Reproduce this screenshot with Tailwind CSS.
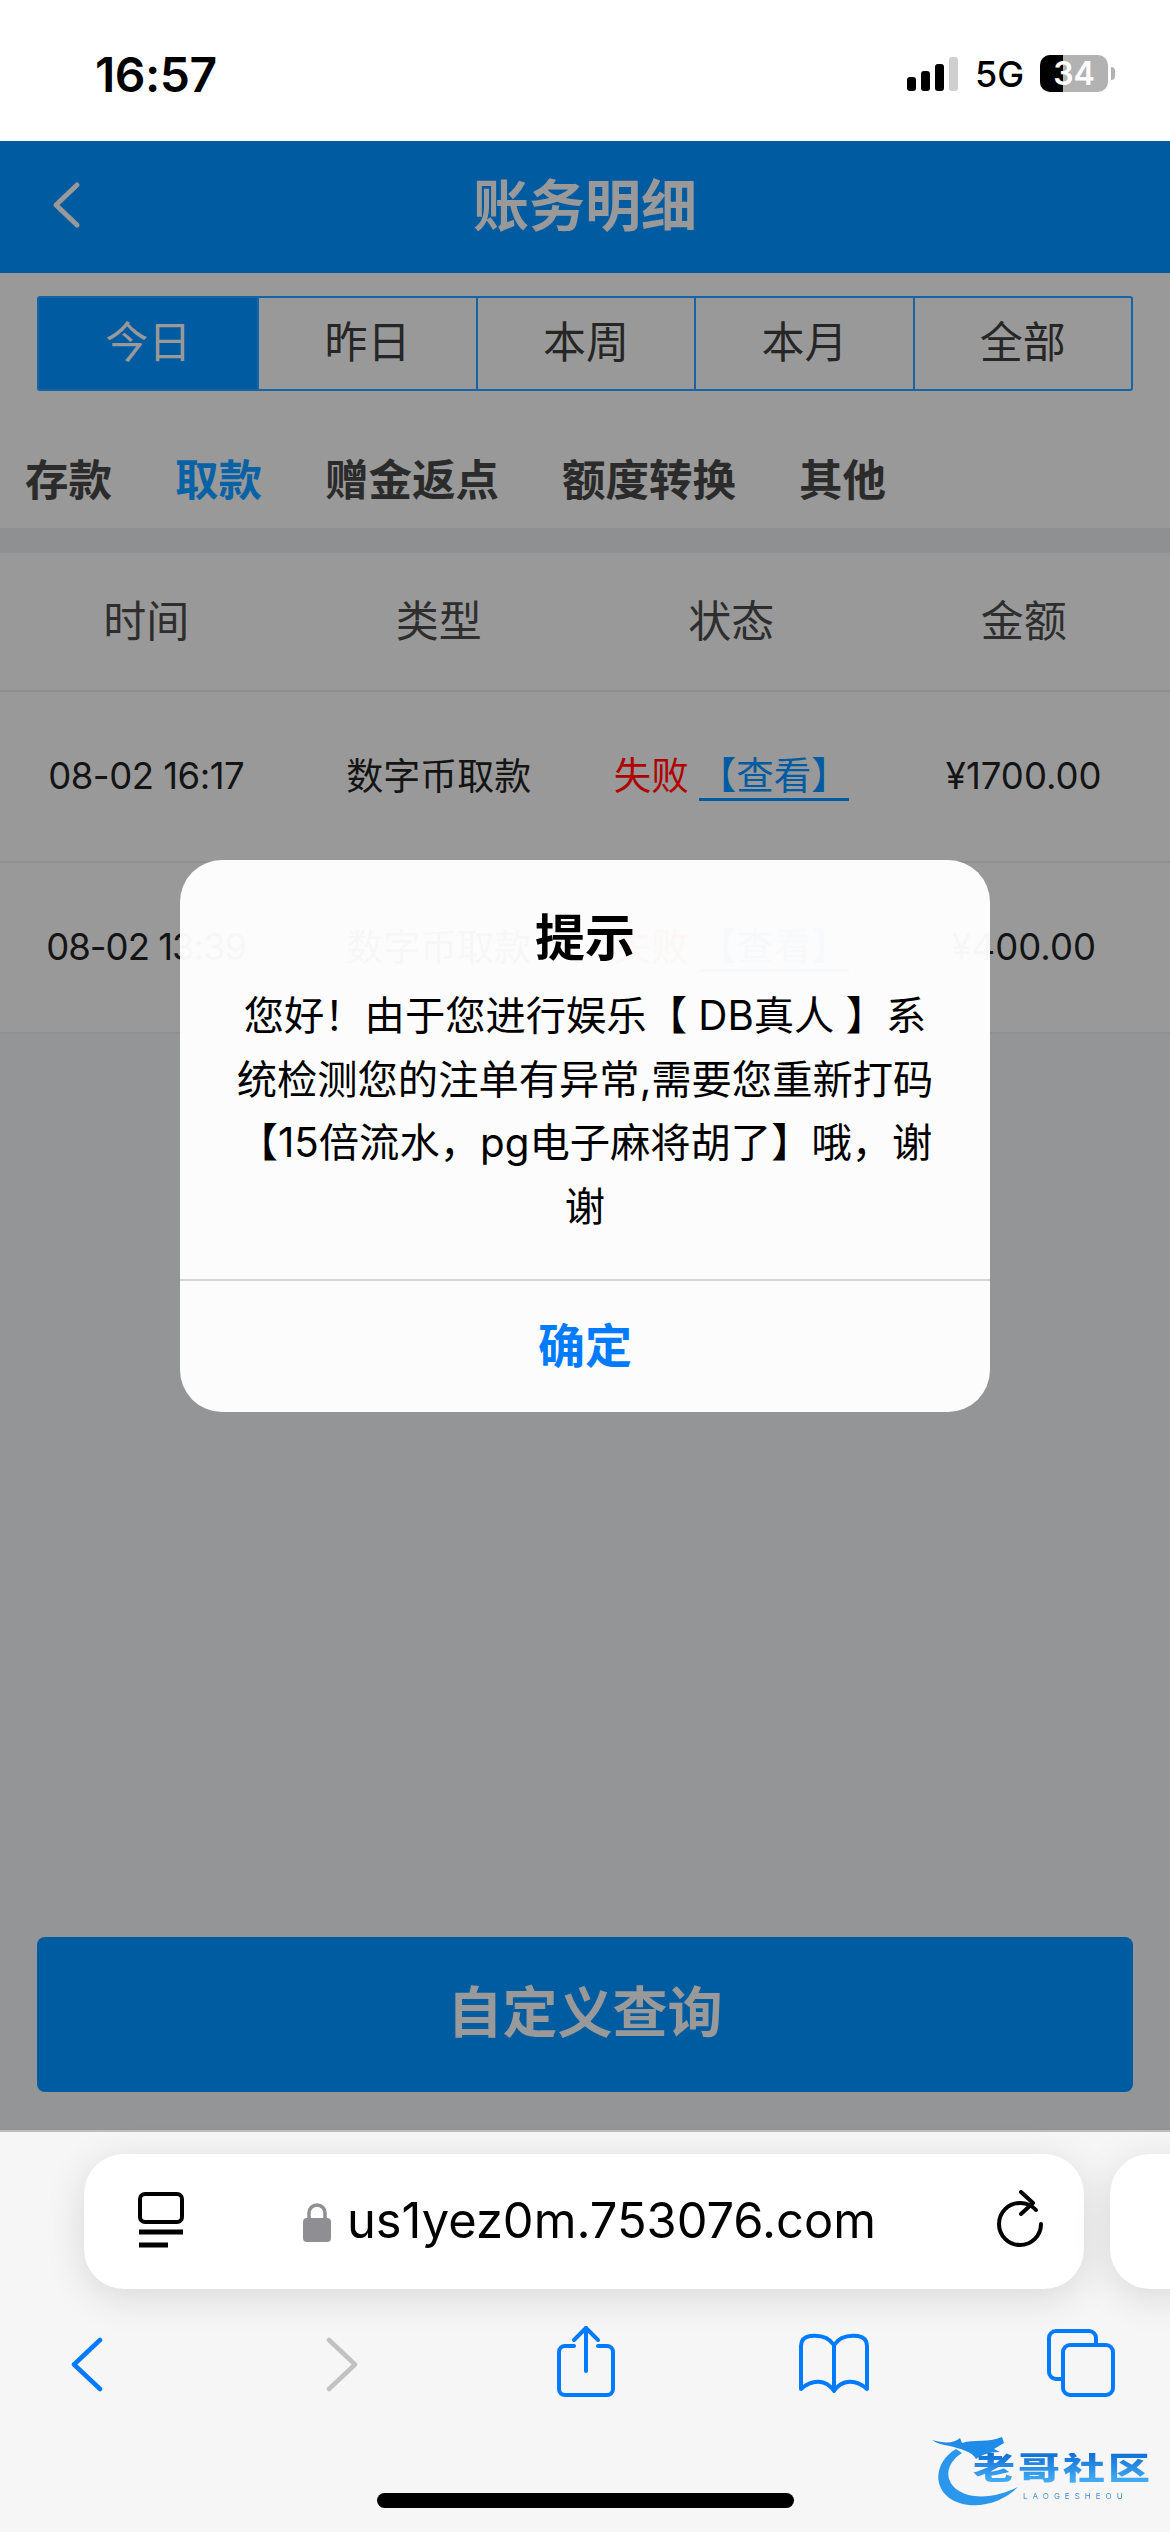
<!DOCTYPE html>
<html lang="zh-CN">
<head>
  <meta charset="UTF-8">
  <meta name="viewport" content="width=device-width, initial-scale=1.0">
  <title>账务明细</title>
  <script src="https://cdn.jsdelivr.net/npm/@tailwindcss/browser@4"></script>
</head>
<body class="bg-[#949597] font-['Inter','Noto_Sans_CJK_SC',sans-serif]">
  <div class="relative w-[1170px] h-[2532px] overflow-hidden flex flex-col">

    <!-- status bar -->
    <div class="h-[141px] shrink-0 bg-white flex items-start">
      <div class="ml-[95px] mt-[48px] text-[48px] leading-[54px] font-semibold text-black tracking-[-0.5px]">16:57</div>
      <div class="ml-auto mt-[55px] flex items-start">
        <div class="mt-[2px] flex items-end gap-[5px] h-[34px]">
          <div class="w-[9px] h-[14px] rounded-[3px] bg-black"></div>
          <div class="w-[9px] h-[20px] rounded-[3px] bg-black"></div>
          <div class="w-[9px] h-[27px] rounded-[3px] bg-black"></div>
          <div class="w-[9px] h-[34px] rounded-[3px] bg-[#cfcfcf]"></div>
        </div>
        <div class="ml-[17px] w-[48px] text-[36px] leading-[38px] font-medium text-black whitespace-nowrap">5G</div>
        <div class="relative ml-[17px] w-[68px] h-[37px] rounded-[10px] bg-[#b2b2b2] overflow-hidden">
          <div class="w-[23px] h-full bg-black"></div>
          <div class="absolute inset-0 flex items-center justify-center text-[32px] font-semibold text-white leading-none">34</div>
        </div>
        <div class="ml-[3px] mt-[12px] w-[4px] h-[13px] rounded-r-full bg-[#b2b2b2] mr-[55px]"></div>
      </div>
    </div>

    <!-- nav -->
    <div class="relative h-[132px] shrink-0 bg-[#005ba1] flex items-center justify-center">
      <svg class="absolute left-[50px] top-[40px] w-[32px] h-[48px]" viewBox="0 0 32 48" fill="none" stroke="#999999" stroke-width="5" stroke-linecap="round" stroke-linejoin="round"><path d="M27 4 L6 24 L27 44"/></svg>
      <div class="pb-[3px] text-[56px] font-bold text-[#999999] leading-none">账务明细</div>
    </div>

    <!-- content, dimmed by the alert -->
    <div class="h-[760px] shrink-0 bg-[#999999]">
      <div class="mt-[23px] mx-[37px] h-[95px] grid grid-cols-5 border-2 border-[#1464a6] rounded-[3px] text-[43px] text-[#262626]">
        <div class="pb-[3px] bg-[#005ba1] text-[#999999] flex items-center justify-center">今日</div>
        <div class="pb-[3px] border-l-2 border-[#1464a6] flex items-center justify-center">昨日</div>
        <div class="pb-[3px] border-l-2 border-[#1464a6] flex items-center justify-center">本周</div>
        <div class="pb-[3px] border-l-2 border-[#1464a6] flex items-center justify-center">本月</div>
        <div class="pb-[3px] border-l-2 border-[#1464a6] flex items-center justify-center">全部</div>
      </div>
      <div class="mt-[62px] ml-[25px] flex gap-[63px] text-[43.5px] leading-[54px] font-bold text-[#2b2b2b]">
        <span>存款</span><span class="text-[#0a62a6]">取款</span><span>赠金返点</span><span>额度转换</span><span>其他</span>
      </div>
      <div class="mt-[21px] h-[25px] bg-[#8f9092]"></div>
      <div class="h-[139px] grid grid-cols-4 items-center text-center text-[43px] text-[#2e2e2e] border-b-2 border-[#8f8f8f]">
        <div>时间</div><div>类型</div><div>状态</div><div>金额</div>
      </div>
      <div class="h-[171px] grid grid-cols-4 items-center text-center text-[36.5px] text-[#141414] border-b-2 border-[#8f8f8f]">
        <div class="tracking-[-0.5px]">08-02 16:17</div>
        <div class="text-[37px]">数字币取款</div>
        <div class="whitespace-nowrap text-[37.5px]"><span class="text-[#b00000]">失败</span><span class="ml-[10px] text-[#005ba1] border-b-[3px] border-[#005ba1]">【查看】</span></div>
        <div>¥1700.00</div>
      </div>
      <div class="h-[171px] grid grid-cols-4 items-center text-center text-[36.5px] text-[#141414] border-b-2 border-[#8f8f8f]">
        <div class="tracking-[-1px]">08-02 13:39</div>
        <div class="text-[37px]">数字币取款</div>
        <div class="whitespace-nowrap text-[37.5px]"><span class="text-[#b00000]">失败</span><span class="ml-[10px] text-[#005ba1] border-b-[3px] border-[#005ba1]">【查看】</span></div>
        <div>¥400.00</div>
      </div>
    </div>

    <!-- query button -->
    <div class="flex-1 pt-[904px] px-[37px]">
    </div>

    <!-- safari bar -->
    <div class="relative h-[402px] shrink-0 bg-[#f6f6f6] border-t-2 border-[#bdbdbd]">
      <div class="absolute left-[84px] top-[22px] w-[1000px] h-[135px] rounded-[40px] bg-white shadow-[0_8px_40px_rgba(0,0,0,0.12)] flex items-center">
        <svg class="ml-[54px] w-[46px] h-[56px] -mt-[4px]" viewBox="0 0 46 56" fill="none" stroke="#000" stroke-width="4"><rect x="2" y="2" width="42" height="28" rx="5"/><path d="M1 40 H45" stroke-width="5"/><path d="M1 53 H30" stroke-width="5"/></svg>
        <svg class="ml-[118px] w-[30px] h-[40px]" viewBox="0 0 30 40" fill="#8e8e93"><path d="M7 18 V11 a8 8 0 0 1 16 0 V18" fill="none" stroke="#8e8e93" stroke-width="3.5"/><rect x="1" y="16" width="28" height="24" rx="4"/></svg>
        <div class="ml-[15px] text-[48.8px] leading-none text-black whitespace-nowrap">us1yez0m.753076.com</div>
        <svg class="absolute left-[912px] top-[36px] w-[48px] h-[58px]" viewBox="0 0 48 58" fill="none" stroke="#000" stroke-width="4" stroke-linecap="round" stroke-linejoin="round"><path d="M24 13 A21 21 0 1 0 45 34"/><path d="M24 13 A21 21 0 0 1 40 20"/><path d="M25 2 L37 13 L25 24"/></svg>
      </div>
      <div class="absolute left-[1110px] top-[22px] w-[100px] h-[135px] rounded-[40px] bg-white shadow-[0_8px_40px_rgba(0,0,0,0.12)]"></div>

      <div class="absolute left-0 top-[193px] flex items-start">
        <svg class="ml-[70px] mt-[12px] w-[33px] h-[55px]" viewBox="0 0 33 55" fill="none" stroke="#007aff" stroke-width="4.5" stroke-linecap="round" stroke-linejoin="round"><path d="M30 3 L4 27.5 L30 52"/></svg>
        <svg class="ml-[223px] mt-[12px] w-[33px] h-[55px]" viewBox="0 0 33 55" fill="none" stroke="#c2c2c2" stroke-width="4.5" stroke-linecap="round" stroke-linejoin="round"><path d="M3 3 L29 27.5 L3 52"/></svg>
        <svg class="ml-[198px] w-[58px] h-[72px]" viewBox="0 0 58 72" fill="none" stroke="#007aff" stroke-width="4" stroke-linecap="round" stroke-linejoin="round"><path d="M17 21 H8 a6 6 0 0 0 -6 6 V64 a6 6 0 0 0 6 6 H50 a6 6 0 0 0 6 -6 V27 a6 6 0 0 0 -6 -6 H41"/><path d="M29 46 V3"/><path d="M17 15 L29 3 L41 15"/></svg>
        <svg class="ml-[183px] mt-[8px] w-[72px] h-[60px]" viewBox="0 0 72 60" fill="none" stroke="#007aff" stroke-width="4" stroke-linejoin="round"><path d="M36 12 C30 3 20 2 12 3 C6 4 3 7 3 13 V56 C14 46 28 46 36 58 C44 46 58 46 69 56 V13 C69 7 66 4 60 3 C52 2 42 3 36 12 Z"/><path d="M36 12 V58"/></svg>
        <svg class="ml-[177px] mt-[4px] w-[68px] h-[68px]" viewBox="0 0 68 68" fill="none" stroke="#007aff" stroke-width="4"><path d="M15 50 H9 a7 7 0 0 1 -7 -7 V9 a7 7 0 0 1 7 -7 H42 a7 7 0 0 1 7 7 V16"/><rect x="16" y="16" width="50" height="50" rx="7"/></svg>
      </div>

      <div class="absolute left-[377px] top-[361px] w-[417px] h-[15px] rounded-full bg-black"></div>

      <!-- watermark -->
      <div class="absolute left-[932px] top-[293px] w-[226px] h-[88px]">
        <svg class="absolute left-0 top-0 w-[100px] h-[88px] blur-[0.6px]" viewBox="0 0 100 88" fill="none"><path d="M24 24 C6 34 -1 58 16 72 C34 86 66 82 86 62 C66 72 40 76 24 64 C12 54 14 38 30 28 Z" fill="#2a96ec"/><path d="M0 15 C14 19 22 18 28 13 L30 18 C42 14 56 18 70 12 L72 18 L62 24 L68 27 C56 27 50 30 44 34 C40 26 28 24 18 21 C10 20 4 18 0 15 Z" fill="#1f8be8"/></svg>
        <div class="absolute left-[41px] top-[29px] w-[180px] text-[42px] leading-[42px] font-black tracking-[3px] whitespace-nowrap scale-y-[0.72] origin-top-left -translate-y-px text-transparent bg-clip-text bg-linear-to-b from-[#0f6fd6] to-[#46b0f5] blur-[0.3px]">老哥社区</div>
        <div class="absolute left-[91px] top-[67px] text-[8px] leading-none text-[#3f8fd8] whitespace-nowrap tracking-[5px] blur-[0.2px]">LAOGESHEOU</div>
      </div>
    </div>

    <!-- button lies on the dimmed area -->
    <div class="absolute left-[37px] top-[1937px] w-[1096px] h-[155px] pb-[5px] rounded-[8px] bg-[#005ca0] flex items-center justify-center text-[55px] font-bold text-[#999999]">自定义查询</div>

    <!-- alert -->
    <div class="absolute left-[180px] top-[860px] w-[810px] h-[552px] rounded-[42px] bg-[#ffffff]/97 flex flex-col text-center">
      <div class="mt-[45px] text-[50px] leading-[66px] font-semibold text-black">提示</div>
      <div class="mt-[13px] h-[256px] text-[40.3px] leading-[63.5px] text-black whitespace-nowrap">
        您好！由于您进行娱乐【 DB真人 】系<br>统检测您的注单有异常,需要您重新打码<br>【15倍流水，pg电子麻将胡了】哦，谢<br>谢
      </div>
      <div class="mt-[39px] border-t-2 border-[#d4d4d4] flex-1 flex items-center justify-center text-[47px] font-semibold text-[#007aff]">确定</div>
    </div>
  </div>
</body>
</html>
